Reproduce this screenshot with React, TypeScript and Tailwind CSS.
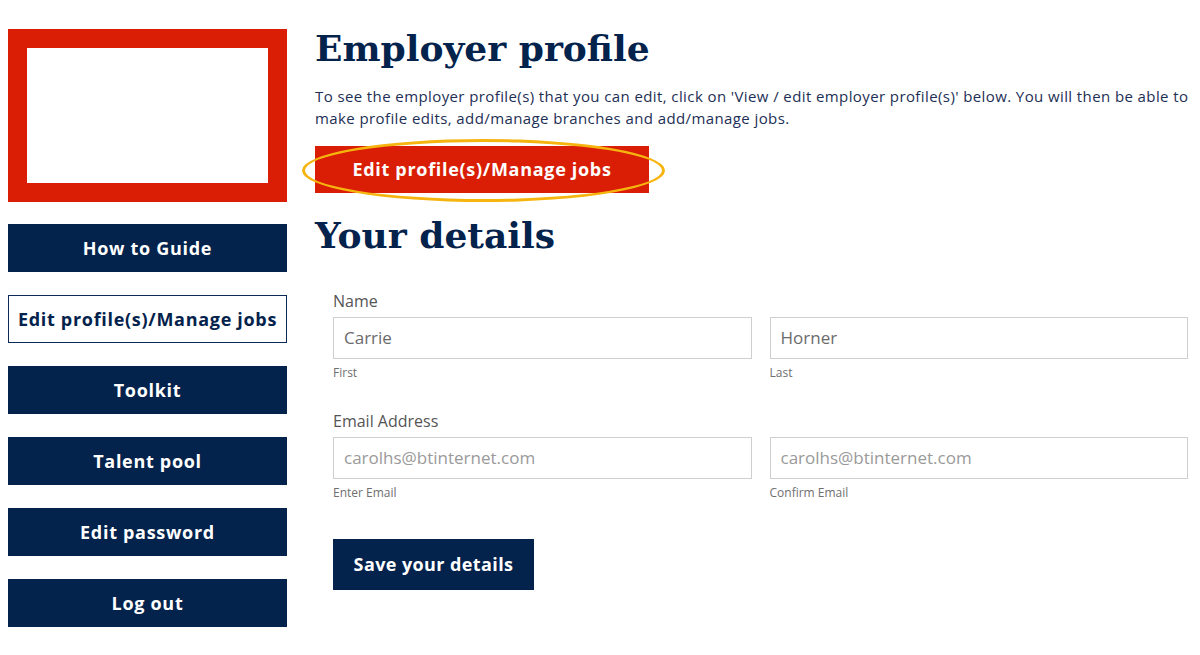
import React from "react";

const navItems = [
  { label: "How to Guide", active: false },
  { label: "Edit profile(s)/Manage jobs", active: true },
  { label: "Toolkit", active: false },
  { label: "Talent pool", active: false },
  { label: "Edit password", active: false },
  { label: "Log out", active: false },
];

const sans = { fontFamily: "'Open Sans', 'Liberation Sans', sans-serif" };
const slab = { fontFamily: "'DejaVu Serif', 'Liberation Serif', serif" };

function Field({ value, hint, muted }: { value: string; hint: string; muted?: boolean }) {
  return (
    <div className="flex flex-col">
      <div
        className={
          "h-[42px] border border-[#cfcfcf] bg-white px-[10px] flex items-center text-[17px] " +
          (muted ? "text-[#9a9a9a]" : "text-[#6b6b6b]")
        }
      >
        {value}
      </div>
      <span className="mt-[6px] text-[12px] leading-[16px] text-[#6f6f6f]">{hint}</span>
    </div>
  );
}

export default function App() {
  return (
    <div className="flex gap-[28px] pl-[8px] pt-[29px] bg-white min-h-[655px]" style={sans}>
      {/* sidebar */}
      <div className="w-[279px] shrink-0 flex flex-col">
        <div className="h-[173px] border-[19px] border-[#d91e05] bg-white" />
        <div className="mt-[22px] flex flex-col gap-[23px]">
          {navItems.map((n) => (
            <div
              key={n.label}
              className={
                "h-[48px] flex items-center justify-center text-[18px] font-bold tracking-[0.7px] " +
                (n.active ? "border border-[#0b2a55] bg-white text-[#03224c]" : "bg-[#03224c] text-white")
              }
            >
              {n.label}
            </div>
          ))}
        </div>
      </div>

      {/* main */}
      <div className="flex-1">
        <h1 className="text-[36px] leading-[40px] font-bold text-[#03224c] -mt-[1px]" style={slab}>
          Employer profile
        </h1>
        <p className="mt-[17px] text-[15px] leading-[22px] text-[#1d2f55] tracking-[0.4px]">
          To see the employer profile(s) that you can edit, click on 'View / edit employer profile(s)' below. You will then be able to make profile edits, add/manage branches and add/manage jobs.
        </p>
        <div className="relative mt-[17px] w-[334px]">
          <div className="h-[47px] bg-[#d91e05] text-white text-[18px] font-bold tracking-[0.7px] flex items-center justify-center">
            Edit profile(s)/Manage jobs
          </div>
          <div className="absolute left-[-13px] top-[-7px] w-[363px] h-[63px] rounded-[50%] border-[3px] border-[#f6b40e] pointer-events-none" />
        </div>

        <h2 className="mt-[22px] text-[36px] leading-[40px] font-bold text-[#03224c]" style={slab}>
          Your details
        </h2>

        <div className="mt-[35px] pl-[18px] pr-[12px]">
          <div className="text-[16px] leading-[22px] text-[#555]">Name</div>
          <div className="mt-[5px] grid grid-cols-2 gap-[18px]">
            <Field value="Carrie" hint="First" />
            <Field value="Horner" hint="Last" />
          </div>

          <div className="mt-[29px] text-[16px] leading-[22px] text-[#555]">Email Address</div>
          <div className="mt-[5px] grid grid-cols-2 gap-[18px]">
            <Field value="carolhs@btinternet.com" hint="Enter Email" muted />
            <Field value="carolhs@btinternet.com" hint="Confirm Email" muted />
          </div>

          <div className="mt-[38px] w-[201px] h-[51px] bg-[#03224c] text-white text-[18px] font-bold tracking-[0.4px] flex items-center justify-center">
            Save your details
          </div>
        </div>
      </div>
    </div>
  );
}
